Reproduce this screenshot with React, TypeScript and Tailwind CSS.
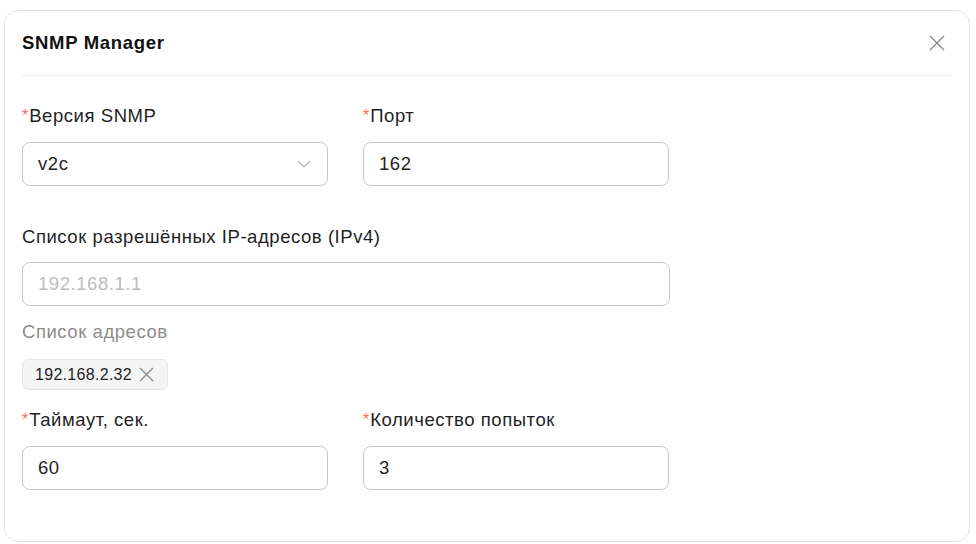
import React from 'react';

const Label = ({ text, required }: { text: string; required?: boolean }) => (
  <div className="flex items-center h-[24px] text-[18.5px] tracking-[0.55px] text-[#1f1f1f] leading-[24px]">
    {required && <span className="text-[#f56c6c] text-[16px] tracking-normal mr-[1px]">*</span>}
    {text}
  </div>
);

const Field = ({ value, placeholder, chevron }: { value?: string; placeholder?: string; chevron?: boolean }) => (
  <div className="flex items-center justify-between h-[44px] border border-[#c9c9c9] rounded-[8px] pl-[15px] pr-[16px] text-[18.5px] tracking-[0.55px]">
    {value ? (
      <span className="text-[#1f1f1f]">{value}</span>
    ) : (
      <span className="text-[#bdbdbd]">{placeholder}</span>
    )}
    {chevron && (
      <svg width="14" height="10" viewBox="0 0 14 10" fill="none" stroke="#b5b5b5" strokeWidth="1.2">
        <path d="M1 2 L7 8 L13 2" />
      </svg>
    )}
  </div>
);

export default function App() {
  return (
    <div className="w-[976px] h-[544px] bg-white pt-[10px] pl-[4px]" style={{ fontFamily: '"Liberation Sans", Arial, sans-serif' }}>
      <div className="w-[966px] h-[532px] border border-[#e3e3e3] rounded-[14px] pl-[17px] pr-[17px]">
        {/* Header */}
        <div className="flex items-center justify-between h-[65px] border-b border-[#ececec] pr-[7px]">
          <h2 className="text-[18.5px] font-bold tracking-[0.7px] text-[#111]">SNMP Manager</h2>
          <button className="text-[#8c8c8c]" aria-label="Close">
            <svg width="16" height="16" viewBox="0 0 16 16" fill="none" stroke="currentColor" strokeWidth="1.4">
              <path d="M1 1 L15 15 M15 1 L1 15" />
            </svg>
          </button>
        </div>

        {/* Row 1 */}
        <div className="flex gap-[35px] mt-[28px]">
          <div className="w-[306px] flex flex-col gap-[14px]">
            <Label text="Версия SNMP" required />
            <Field value="v2c" chevron />
          </div>
          <div className="w-[306px] flex flex-col gap-[14px]">
            <Label text="Порт" required />
            <Field value="162" />
          </div>
        </div>

        {/* IP list */}
        <div className="w-[648px] flex flex-col gap-[13px] mt-[39px]">
          <Label text="Список разрешённых IP-адресов (IPv4)" />
          <Field placeholder="192.168.1.1" />
        </div>

        <div className="mt-[14px] h-[24px] leading-[24px] text-[18.5px] tracking-[0.55px] text-[#8c8c8c]">Список адресов</div>

        <div className="mt-[15px] flex">
          <div className="flex items-center gap-[7px] h-[31px] pl-[12px] pr-[13px] bg-[#f4f4f4] border border-[#e6e6e6] rounded-[6px] text-[16px] tracking-[0.3px] text-[#1f1f1f]">
            192.168.2.32
            <svg width="15" height="15" viewBox="0 0 15 15" fill="none" stroke="#8c8c8c" strokeWidth="1.4">
              <path d="M1 1 L14 14 M14 1 L1 14" />
            </svg>
          </div>
        </div>

        {/* Row 3 */}
        <div className="flex gap-[35px] mt-[18px]">
          <div className="w-[306px] flex flex-col gap-[14px]">
            <Label text="Таймаут, сек." required />
            <Field value="60" />
          </div>
          <div className="w-[306px] flex flex-col gap-[14px]">
            <Label text="Количество попыток" required />
            <Field value="3" />
          </div>
        </div>
      </div>
    </div>
  );
}
